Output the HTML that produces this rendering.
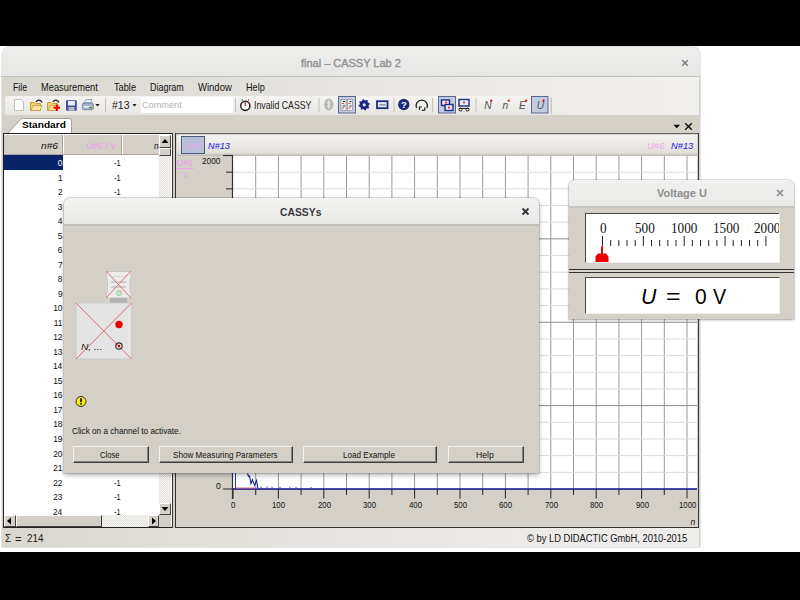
<!DOCTYPE html>
<html><head><meta charset="utf-8"><style>
html,body{margin:0;padding:0}
body{width:800px;height:600px;background:#000;position:relative;overflow:hidden;font-family:"Liberation Sans",sans-serif}
body>div,body>svg{position:absolute}
.t{white-space:nowrap}
</style></head><body>
<div style="left:0px;top:46px;width:800px;height:506px;background:#fff"></div>
<div style="left:1.5px;top:47px;width:698.5px;height:500px;background:#d4d0c8;border-radius:7px 7px 0 0;box-shadow:0 0 0 0.5px #c9c9c9"></div>
<div style="left:1px;top:47px;width:699px;height:30px;background:linear-gradient(#eeeeed,#e6e6e5);border-radius:7px 7px 0 0;border-bottom:1px solid #c2c0bc;box-sizing:border-box"></div>
<div class="t" style="left:301.00px;top:53.00px;font-size:11.2px;line-height:20px;transform:scaleX(0.9803);transform-origin:0 0;-webkit-text-stroke:0.35px #8e9091;color:#8e9091">final – CASSY Lab 2</div>
<svg style="left:681px;top:59px" width="8" height="8"><path d="M1.2 1.2L6.8 6.8M6.8 1.2L1.2 6.8" stroke="#7e7e7e" stroke-width="1.5"/></svg>
<div style="left:2px;top:77px;width:697px;height:38px;background:linear-gradient(to right,#d9d6cf,#e6e4e0 45%,#f1f0ee)"></div>
<div class="t" style="left:13.36px;top:78.00px;font-size:10.2px;line-height:20px;transform:scaleX(0.8525);transform-origin:0 0;color:#111">File</div>
<div class="t" style="left:41.02px;top:78.00px;font-size:10.2px;line-height:20px;transform:scaleX(0.9122);transform-origin:0 0;color:#111">Measurement</div>
<div class="t" style="left:113.77px;top:78.00px;font-size:10.2px;line-height:20px;transform:scaleX(0.9053);transform-origin:0 0;color:#111">Table</div>
<div class="t" style="left:149.54px;top:78.00px;font-size:10.2px;line-height:20px;transform:scaleX(0.8779);transform-origin:0 0;color:#111">Diagram</div>
<div class="t" style="left:198.10px;top:78.00px;font-size:10.2px;line-height:20px;transform:scaleX(0.9324);transform-origin:0 0;color:#111">Window</div>
<div class="t" style="left:246.13px;top:78.00px;font-size:10.2px;line-height:20px;transform:scaleX(0.8950);transform-origin:0 0;color:#111">Help</div>
<div style="left:5px;top:96px;width:547px;height:19px;background:linear-gradient(#f5f4f2,#e8e6e2);border-radius:3px 0 0 3px"></div>
<div style="left:551px;top:97px;width:1px;height:17px;background:#d0cec8"></div>
<div style="left:2px;top:114.5px;width:697px;height:1px;background:#c9c6bf"></div>
<svg style="left:0;top:0" width="800" height="130"><path d="M14.5 99.5 H21 L23.5 102 V110.5 H14.5z" fill="#fff" stroke="#bdbdbd"/><path d="M30.5 102.5 h4 l1 1 h5 v7 h-10z" fill="#f0d27a" stroke="#c89c3c"/><path d="M31 110.5 l2 -5 h9 l-2 5z" fill="#fbe49a" stroke="#c89c3c" stroke-width="0.8"/><path d="M36 102 q2 -3 5 -1 l1 1.5" fill="none" stroke="#111" stroke-width="1.2"/><path d="M47.5 102.5 h4 l1 1 h5 v7 h-10z" fill="#f0d27a" stroke="#c89c3c"/><path d="M48 110.5 l2 -5 h9 l-2 5z" fill="#fbe49a" stroke="#c89c3c" stroke-width="0.8"/><path d="M53 102 q2 -3 5 -1 l1 1.5" fill="none" stroke="#111" stroke-width="1.2"/><path d="M56.8 104.5 v6.5 M53.5 107.8 h6.5" stroke="#e00" stroke-width="2"/><rect x="66" y="100.3" width="10.8" height="10.4" fill="#3f51a8" rx="0.8"/><rect x="68" y="101" width="7" height="4.5" fill="#e8ecf8"/><rect x="68.5" y="107" width="6" height="3.7" fill="#b8b8c0"/><path d="M84 103 l2 -3.5 h6 l-1 3.5z" fill="#e6eef6" stroke="#8898b0" stroke-width="0.8"/><rect x="82.3" y="103" width="11" height="6.8" rx="1.5" fill="#9fb0c8" stroke="#6a7a98" stroke-width="0.8"/><rect x="83.5" y="106" width="8" height="1.6" fill="#eef"/><rect x="89" y="106.8" width="3" height="1.6" fill="#3a3"/><path d="M95.5 104 h4 l-2 2.5z" fill="#000"/><line x1="105.5" y1="98" x2="105.5" y2="112" stroke="#c4c2bc"/><line x1="235.5" y1="98" x2="235.5" y2="112" stroke="#c4c2bc"/><line x1="319" y1="98" x2="319" y2="112" stroke="#c4c2bc"/><line x1="394" y1="98" x2="394" y2="112" stroke="#c4c2bc"/><line x1="432.5" y1="98" x2="432.5" y2="112" stroke="#c4c2bc"/><line x1="476" y1="98" x2="476" y2="112" stroke="#c4c2bc"/><line x1="551" y1="98" x2="551" y2="112" stroke="#c4c2bc"/><path d="M132.5 104 h4 l-2 2.5z" fill="#000"/><circle cx="245.3" cy="105.8" r="4.6" fill="#fff" stroke="#222" stroke-width="1.5"/><line x1="245.3" y1="102" x2="245.3" y2="106" stroke="#c33" stroke-width="1.2"/><path d="M241.5 100.5 l1.2 -0.8" stroke="#3a3" stroke-width="1.5"/><path d="M248 99.7 l1.2 0.8" stroke="#d44" stroke-width="1.5"/><ellipse cx="328.8" cy="104.5" rx="4.6" ry="6" fill="#b8b8b8"/><path d="M327 102 l3.5 4.5 l-2 1.8 v-8 l2 1.8 l-3.5 4.5" fill="none" stroke="#e8e8e8" stroke-width="0.9"/><rect x="338.5" y="96.5" width="17" height="16.5" fill="#c3cbe0" stroke="#5a6890" stroke-width="1"/><rect x="438.5" y="96.5" width="17" height="16.5" fill="#c3cbe0" stroke="#5a6890" stroke-width="1"/><rect x="531.5" y="96.5" width="16.5" height="16.5" fill="#c3cbe0" stroke="#5a6890" stroke-width="1"/><rect x="341" y="99.5" width="5" height="11" fill="#f0f0f0" stroke="#888" stroke-width="0.6"/><rect x="347.5" y="99.5" width="5" height="11" fill="#f0f0f0" stroke="#888" stroke-width="0.6"/><path d="M343 101.5h2M349.5 101.5h2M343 106h2M349.5 106h2" stroke="#222" stroke-width="1"/><path d="M342 103.5h2M348.5 103.5h2M342 108h2M348.5 108h2" stroke="#d44" stroke-width="1"/><polygon points="370.08,103.63 368.42,105.64 369.19,108.13 366.59,108.38 365.37,110.68 363.36,109.02 360.87,109.79 360.62,107.19 358.32,105.97 359.98,103.96 359.21,101.47 361.81,101.22 363.03,98.92 365.04,100.58 367.53,99.81 367.78,102.41" fill="#1c2580"/><circle cx="364.2" cy="104.8" r="1.6" fill="#e6e6f0"/><rect x="377" y="101.2" width="10.5" height="7" fill="#e8e8f0" stroke="#1c2a80" stroke-width="1.8"/><rect x="379.3" y="104" width="6" height="1.6" fill="#999"/><circle cx="403.8" cy="104.5" r="5.7" fill="#1e2a7a"/><text x="403.8" y="108.2" font-family="Liberation Sans" font-weight="bold" font-size="9.5" fill="#fff" text-anchor="middle">?</text><path d="M416.5 108 a5.7 5.7 0 1 1 10.5 0" fill="none" stroke="#222" stroke-width="1.3"/><path d="M419.5 110 v-3 h2.5 M422 110 a1.5 1.5 0 1 0 2.5 -2.5" fill="none" stroke="#222" stroke-width="1.2"/><rect x="441.5" y="100" width="8" height="5.5" fill="#e8ecf6" stroke="#1c2a80" stroke-width="1.4"/><rect x="445" y="104.5" width="8" height="6" fill="#e8ecf6" stroke="#1c2a80" stroke-width="1.4"/><circle cx="446" cy="102.5" r="1" fill="#e22"/><circle cx="449" cy="107.5" r="1.1" fill="#e22"/><rect x="459" y="99.5" width="10" height="6.5" fill="#e8ecf6" stroke="#1c2a80" stroke-width="1.4"/><circle cx="464" cy="102.5" r="1.1" fill="#e22"/><path d="M459 108.5 h10" stroke="#222" stroke-width="1"/><circle cx="460.5" cy="109.5" r="1.5" fill="none" stroke="#222"/><circle cx="467.5" cy="109.5" r="1.5" fill="none" stroke="#222"/><text x="488" y="108.5" font-family="Liberation Sans" font-style="italic" font-size="10.2" fill="#505050" text-anchor="middle">N</text><circle cx="491.3" cy="100.7" r="1.1" fill="#e00"/><text x="505.3" y="108.5" font-family="Liberation Sans" font-style="italic" font-size="10.2" fill="#505050" text-anchor="middle">n</text><circle cx="508.8" cy="100.7" r="1.1" fill="#e00"/><text x="522.5" y="108.5" font-family="Liberation Sans" font-style="italic" font-size="10.2" fill="#505050" text-anchor="middle">E</text><circle cx="526" cy="100.7" r="1.1" fill="#e00"/><text x="540.5" y="108.5" font-family="Liberation Sans" font-style="italic" font-size="10.2" fill="#505050" text-anchor="middle">U</text><circle cx="543.5" cy="100.7" r="1.1" fill="#e00"/></svg>
<div class="t" style="left:112.00px;top:96.00px;font-size:10px;line-height:20px;transform:scaleX(1.0462);transform-origin:0 0;color:#222">#13</div>
<div style="left:141px;top:96.5px;width:91.5px;height:16px;background:#fff"></div>
<div class="t" style="left:142.42px;top:95.00px;font-size:9.6px;line-height:20px;transform:scaleX(0.9552);transform-origin:0 0;color:#b4b4b4">Comment</div>
<div class="t" style="left:253.66px;top:96.00px;font-size:10.4px;line-height:20px;transform:scaleX(0.8433);transform-origin:0 0;color:#222">Invalid CASSY</div>
<div style="left:2px;top:115px;width:697px;height:18px;background:#d4d0c8"></div>
<svg style="left:7px;top:118px" width="66" height="16"><path d="M0.5 15.5 L13.5 1.5 Q14.5 0.5 16.5 0.5 L62 0.5 Q64.5 0.5 64.5 3 L64.5 15.5" fill="#fff" stroke="#a09e98"/></svg>
<div class="t" style="left:21.73px;top:115.00px;font-size:9.3px;line-height:20px;transform:scaleX(1.0886);transform-origin:0 0;font-weight:bold;color:#000">Standard</div>
<svg style="left:672.5px;top:124px" width="8" height="6"><path d="M0.5 0.8H7L3.75 4.3z" fill="#000"/></svg>
<svg style="left:684px;top:122px" width="9" height="9"><path d="M1.2 1.2L7.8 7.8M7.8 1.2L1.2 7.8" stroke="#000" stroke-width="1.25"/></svg>
<div style="left:2px;top:528px;width:697px;height:18.5px;background:linear-gradient(to right,#d9d6cf,#e6e4e0 45%,#f0efed)"></div>
<div class="t" style="left:5.02px;top:529.00px;font-size:10.2px;line-height:20px;transform:scaleX(0.9636);transform-origin:0 0;color:#1a1a1a">Σ</div>
<div class="t" style="left:14.95px;top:530.00px;font-size:10.2px;line-height:20px;transform:scaleX(1.1000);transform-origin:0 0;color:#1a1a1a">=</div>
<div class="t" style="left:27.42px;top:529.00px;font-size:10.2px;line-height:20px;transform:scaleX(0.9662);transform-origin:0 0;color:#1a1a1a">214</div>
<div class="t" style="left:527.20px;top:529.00px;font-size:10px;line-height:20px;transform:scaleX(0.9351);transform-origin:0 0;color:#111">© by LD DIDACTIC GmbH, 2010-2015</div>
<div style="left:3px;top:133px;width:169px;height:395px;background:#fff;border:1px solid #222;border-right:none;box-sizing:border-box"></div>
<div style="left:4px;top:135px;width:155px;height:20px;background:#d4d0c8"></div>
<div style="left:62px;top:135px;width:1px;height:20px;background:#a9a59d"></div>
<div style="left:63px;top:135px;width:1px;height:20px;background:#fff"></div>
<div style="left:121px;top:135px;width:1px;height:20px;background:#a9a59d"></div>
<div style="left:122px;top:135px;width:1px;height:20px;background:#fff"></div>
<div style="left:4px;top:154px;width:155px;height:1px;background:#a9a59d"></div>
<div class="t" style="left:41.00px;top:137.00px;font-size:8.2px;line-height:20px;transform:scaleX(1.2436);transform-origin:0 0;font-style:italic;color:#111">n#6</div>
<div class="t" style="left:85.69px;top:137.00px;font-size:8.2px;line-height:20px;transform:scaleX(1.1145);transform-origin:0 0;font-style:italic;color:#ec9aec">U#6 / V</div>
<div class="t" style="left:154.00px;top:137.00px;font-size:8.2px;line-height:20px;transform:scaleX(1.0000);transform-origin:0 0;font-style:italic;color:#111">n</div>
<div style="left:4px;top:155px;width:58.5px;height:14.5px;background:#0a246a"></div>
<div class="t" style="left:57.70px;top:153.00px;font-size:8.4px;line-height:20px;transform:scaleX(1.0000);transform-origin:0 0;color:#fff">0</div>
<div class="t" style="left:113.78px;top:153.00px;font-size:8.4px;line-height:20px;transform:scaleX(0.8857);transform-origin:0 0;color:#111">-1</div>
<div class="t" style="left:57.95px;top:168.00px;font-size:8.4px;line-height:20px;transform:scaleX(1.0000);transform-origin:0 0;color:#111">1</div>
<div class="t" style="left:113.78px;top:168.00px;font-size:8.4px;line-height:20px;transform:scaleX(0.8857);transform-origin:0 0;color:#111">-1</div>
<div class="t" style="left:57.95px;top:182.00px;font-size:8.4px;line-height:20px;transform:scaleX(1.0000);transform-origin:0 0;color:#111">2</div>
<div class="t" style="left:113.78px;top:182.00px;font-size:8.4px;line-height:20px;transform:scaleX(0.8857);transform-origin:0 0;color:#111">-1</div>
<div class="t" style="left:57.70px;top:197.00px;font-size:8.4px;line-height:20px;transform:scaleX(1.0000);transform-origin:0 0;color:#111">3</div>
<div class="t" style="left:113.78px;top:197.00px;font-size:8.4px;line-height:20px;transform:scaleX(0.8857);transform-origin:0 0;color:#111">-1</div>
<div class="t" style="left:57.70px;top:211.00px;font-size:8.4px;line-height:20px;transform:scaleX(1.0000);transform-origin:0 0;color:#111">4</div>
<div class="t" style="left:113.78px;top:211.00px;font-size:8.4px;line-height:20px;transform:scaleX(0.8857);transform-origin:0 0;color:#111">-1</div>
<div class="t" style="left:57.70px;top:226.00px;font-size:8.4px;line-height:20px;transform:scaleX(1.0000);transform-origin:0 0;color:#111">5</div>
<div class="t" style="left:113.78px;top:226.00px;font-size:8.4px;line-height:20px;transform:scaleX(0.8857);transform-origin:0 0;color:#111">-1</div>
<div class="t" style="left:57.70px;top:240.00px;font-size:8.4px;line-height:20px;transform:scaleX(1.0000);transform-origin:0 0;color:#111">6</div>
<div class="t" style="left:113.78px;top:240.00px;font-size:8.4px;line-height:20px;transform:scaleX(0.8857);transform-origin:0 0;color:#111">-1</div>
<div class="t" style="left:57.95px;top:255.00px;font-size:8.4px;line-height:20px;transform:scaleX(1.0000);transform-origin:0 0;color:#111">7</div>
<div class="t" style="left:113.78px;top:255.00px;font-size:8.4px;line-height:20px;transform:scaleX(0.8857);transform-origin:0 0;color:#111">-1</div>
<div class="t" style="left:57.70px;top:269.00px;font-size:8.4px;line-height:20px;transform:scaleX(1.0000);transform-origin:0 0;color:#111">8</div>
<div class="t" style="left:113.78px;top:269.00px;font-size:8.4px;line-height:20px;transform:scaleX(0.8857);transform-origin:0 0;color:#111">-1</div>
<div class="t" style="left:57.95px;top:284.00px;font-size:8.4px;line-height:20px;transform:scaleX(1.0000);transform-origin:0 0;color:#111">9</div>
<div class="t" style="left:113.78px;top:284.00px;font-size:8.4px;line-height:20px;transform:scaleX(0.8857);transform-origin:0 0;color:#111">-1</div>
<div class="t" style="left:53.20px;top:298.00px;font-size:8.4px;line-height:20px;transform:scaleX(1.0000);transform-origin:0 0;color:#111">10</div>
<div class="t" style="left:113.78px;top:298.00px;font-size:8.4px;line-height:20px;transform:scaleX(0.8857);transform-origin:0 0;color:#111">-1</div>
<div class="t" style="left:53.70px;top:313.00px;font-size:8.4px;line-height:20px;transform:scaleX(1.0000);transform-origin:0 0;color:#111">11</div>
<div class="t" style="left:113.78px;top:313.00px;font-size:8.4px;line-height:20px;transform:scaleX(0.8857);transform-origin:0 0;color:#111">-1</div>
<div class="t" style="left:53.20px;top:327.00px;font-size:8.4px;line-height:20px;transform:scaleX(1.0000);transform-origin:0 0;color:#111">12</div>
<div class="t" style="left:113.78px;top:327.00px;font-size:8.4px;line-height:20px;transform:scaleX(0.8857);transform-origin:0 0;color:#111">-1</div>
<div class="t" style="left:53.20px;top:342.00px;font-size:8.4px;line-height:20px;transform:scaleX(1.0000);transform-origin:0 0;color:#111">13</div>
<div class="t" style="left:113.78px;top:342.00px;font-size:8.4px;line-height:20px;transform:scaleX(0.8857);transform-origin:0 0;color:#111">-1</div>
<div class="t" style="left:52.95px;top:356.00px;font-size:8.4px;line-height:20px;transform:scaleX(1.0000);transform-origin:0 0;color:#111">14</div>
<div class="t" style="left:113.78px;top:356.00px;font-size:8.4px;line-height:20px;transform:scaleX(0.8857);transform-origin:0 0;color:#111">-1</div>
<div class="t" style="left:53.20px;top:371.00px;font-size:8.4px;line-height:20px;transform:scaleX(1.0000);transform-origin:0 0;color:#111">15</div>
<div class="t" style="left:113.78px;top:371.00px;font-size:8.4px;line-height:20px;transform:scaleX(0.8857);transform-origin:0 0;color:#111">-1</div>
<div class="t" style="left:53.20px;top:385.00px;font-size:8.4px;line-height:20px;transform:scaleX(1.0000);transform-origin:0 0;color:#111">16</div>
<div class="t" style="left:113.78px;top:385.00px;font-size:8.4px;line-height:20px;transform:scaleX(0.8857);transform-origin:0 0;color:#111">-1</div>
<div class="t" style="left:53.20px;top:400.00px;font-size:8.4px;line-height:20px;transform:scaleX(1.0000);transform-origin:0 0;color:#111">17</div>
<div class="t" style="left:113.78px;top:400.00px;font-size:8.4px;line-height:20px;transform:scaleX(0.8857);transform-origin:0 0;color:#111">-1</div>
<div class="t" style="left:53.20px;top:414.00px;font-size:8.4px;line-height:20px;transform:scaleX(1.0000);transform-origin:0 0;color:#111">18</div>
<div class="t" style="left:113.78px;top:414.00px;font-size:8.4px;line-height:20px;transform:scaleX(0.8857);transform-origin:0 0;color:#111">-1</div>
<div class="t" style="left:53.20px;top:429.00px;font-size:8.4px;line-height:20px;transform:scaleX(1.0000);transform-origin:0 0;color:#111">19</div>
<div class="t" style="left:113.78px;top:429.00px;font-size:8.4px;line-height:20px;transform:scaleX(0.8857);transform-origin:0 0;color:#111">-1</div>
<div class="t" style="left:53.20px;top:444.00px;font-size:8.4px;line-height:20px;transform:scaleX(1.0000);transform-origin:0 0;color:#111">20</div>
<div class="t" style="left:113.78px;top:444.00px;font-size:8.4px;line-height:20px;transform:scaleX(0.8857);transform-origin:0 0;color:#111">-1</div>
<div class="t" style="left:53.20px;top:458.00px;font-size:8.4px;line-height:20px;transform:scaleX(1.0000);transform-origin:0 0;color:#111">21</div>
<div class="t" style="left:113.78px;top:458.00px;font-size:8.4px;line-height:20px;transform:scaleX(0.8857);transform-origin:0 0;color:#111">-1</div>
<div class="t" style="left:53.20px;top:473.00px;font-size:8.4px;line-height:20px;transform:scaleX(1.0000);transform-origin:0 0;color:#111">22</div>
<div class="t" style="left:113.78px;top:473.00px;font-size:8.4px;line-height:20px;transform:scaleX(0.8857);transform-origin:0 0;color:#111">-1</div>
<div class="t" style="left:53.20px;top:487.00px;font-size:8.4px;line-height:20px;transform:scaleX(1.0000);transform-origin:0 0;color:#111">23</div>
<div class="t" style="left:113.78px;top:487.00px;font-size:8.4px;line-height:20px;transform:scaleX(0.8857);transform-origin:0 0;color:#111">-1</div>
<div class="t" style="left:52.95px;top:502.00px;font-size:8.4px;line-height:20px;transform:scaleX(1.0000);transform-origin:0 0;color:#111">24</div>
<div class="t" style="left:113.78px;top:502.00px;font-size:8.4px;line-height:20px;transform:scaleX(0.8857);transform-origin:0 0;color:#111">-1</div>
<div style="left:159px;top:135px;width:12px;height:380px;background:repeating-conic-gradient(#e4e2dd 0% 25%, #f6f5f3 0% 50%) 0 0/2px 2px"></div>
<div style="left:159px;top:135px;width:12px;height:12.5px;background:#d4d0c8;border-top:1px solid #fff;border-left:1px solid #fff;border-right:1px solid #404040;border-bottom:1px solid #404040;box-sizing:border-box"></div>
<svg style="left:161px;top:138px" width="8" height="6"><path d="M4 1L7.5 5H0.5z" fill="#000"/></svg>
<div style="left:159px;top:147.5px;width:12px;height:8px;background:#d4d0c8;border-top:1px solid #fff;border-left:1px solid #fff;border-right:1px solid #404040;border-bottom:1px solid #404040;box-sizing:border-box"></div>
<div style="left:159px;top:503px;width:12px;height:12px;background:#d4d0c8;border-top:1px solid #fff;border-left:1px solid #fff;border-right:1px solid #404040;border-bottom:1px solid #404040;box-sizing:border-box"></div>
<svg style="left:161px;top:506px" width="8" height="6"><path d="M0.5 1H7.5L4 5z" fill="#000"/></svg>
<div style="left:4px;top:515px;width:155px;height:12px;background:repeating-conic-gradient(#e4e2dd 0% 25%, #f6f5f3 0% 50%) 0 0/2px 2px"></div>
<div style="left:4px;top:515px;width:11.5px;height:12px;background:#d4d0c8;border-top:1px solid #fff;border-left:1px solid #fff;border-right:1px solid #404040;border-bottom:1px solid #404040;box-sizing:border-box"></div>
<svg style="left:6px;top:517px" width="6" height="8"><path d="M1 4L5 0.5V7.5z" fill="#000"/></svg>
<div style="left:15.5px;top:515px;width:86px;height:12px;background:#d4d0c8;border-top:1px solid #fff;border-left:1px solid #fff;border-right:1px solid #404040;border-bottom:1px solid #404040;box-sizing:border-box"></div>
<div style="left:147.5px;top:515px;width:11.5px;height:12px;background:#d4d0c8;border-top:1px solid #fff;border-left:1px solid #fff;border-right:1px solid #404040;border-bottom:1px solid #404040;box-sizing:border-box"></div>
<svg style="left:151px;top:517px" width="6" height="8"><path d="M5 4L1 0.5V7.5z" fill="#000"/></svg>
<div style="left:159px;top:515px;width:12px;height:12px;background:#d4d0c8"></div>
<div style="left:3px;top:527px;width:169px;height:1px;background:#222"></div>
<div style="left:171.5px;top:133px;width:1px;height:395px;background:#333"></div>
<div style="left:175px;top:133px;width:1px;height:395px;background:#333"></div>
<div style="left:176px;top:133px;width:522px;height:395px;background:#d4d0c8"></div>
<div style="left:697.5px;top:133px;width:1.5px;height:395px;background:#3a3a3a"></div>
<div style="left:176px;top:527px;width:522px;height:1px;background:#333"></div>
<div style="left:176px;top:133px;width:522px;height:1px;background:#666"></div>
<div style="left:177px;top:135px;width:520px;height:20.5px;background:linear-gradient(#f4f3f1,#e2dfda 85%,#bdbab3)"></div>
<div style="left:181px;top:136px;width:23.5px;height:17.5px;background:#b8c0d8;border:1px solid #4a5a80;box-sizing:border-box"></div>
<div class="t" style="left:183.84px;top:136.00px;font-size:8.4px;line-height:20px;transform:scaleX(1.1233);transform-origin:0 0;font-style:italic;color:#e8a0e8">U#6</div>
<div class="t" style="left:207.83px;top:136.00px;font-size:8.4px;line-height:20px;transform:scaleX(1.0962);transform-origin:0 0;font-style:italic;color:#2020dd">N#13</div>
<div class="t" style="left:647.43px;top:136.00px;font-size:8.4px;line-height:20px;transform:scaleX(1.1333);transform-origin:0 0;font-style:italic;color:#f0a8f0">U#6</div>
<div class="t" style="left:670.72px;top:136.00px;font-size:8.4px;line-height:20px;transform:scaleX(1.1139);transform-origin:0 0;font-style:italic;color:#2020dd">N#13</div>
<div class="t" style="left:175.95px;top:153.00px;font-size:8.4px;line-height:20px;transform:scaleX(1.1000);transform-origin:0 0;font-style:italic;color:#ec9aec">U#6</div>
<div style="left:176px;top:168px;width:18px;height:1px;background:#f0a0f0"></div>
<div class="t" style="left:183.25px;top:165.00px;font-size:8.4px;line-height:20px;transform:scaleX(1.0000);transform-origin:0 0;color:#ec9aec">V</div>
<div style="left:233px;top:155.5px;width:464px;height:333.5px;background:#fff"></div>
<svg style="left:0;top:0" width="800" height="600"><line x1="255.70" y1="155.5" x2="255.70" y2="489" stroke="#9a9a9a" stroke-width="1"/><line x1="278.40" y1="155.5" x2="278.40" y2="489" stroke="#9a9a9a" stroke-width="1"/><line x1="301.10" y1="155.5" x2="301.10" y2="489" stroke="#9a9a9a" stroke-width="1"/><line x1="323.80" y1="155.5" x2="323.80" y2="489" stroke="#9a9a9a" stroke-width="1"/><line x1="346.50" y1="155.5" x2="346.50" y2="489" stroke="#9a9a9a" stroke-width="1"/><line x1="369.20" y1="155.5" x2="369.20" y2="489" stroke="#9a9a9a" stroke-width="1"/><line x1="391.90" y1="155.5" x2="391.90" y2="489" stroke="#9a9a9a" stroke-width="1"/><line x1="414.60" y1="155.5" x2="414.60" y2="489" stroke="#9a9a9a" stroke-width="1"/><line x1="437.30" y1="155.5" x2="437.30" y2="489" stroke="#9a9a9a" stroke-width="1"/><line x1="460.00" y1="155.5" x2="460.00" y2="489" stroke="#9a9a9a" stroke-width="1"/><line x1="482.70" y1="155.5" x2="482.70" y2="489" stroke="#9a9a9a" stroke-width="1"/><line x1="505.40" y1="155.5" x2="505.40" y2="489" stroke="#9a9a9a" stroke-width="1"/><line x1="528.10" y1="155.5" x2="528.10" y2="489" stroke="#9a9a9a" stroke-width="1"/><line x1="550.80" y1="155.5" x2="550.80" y2="489" stroke="#9a9a9a" stroke-width="1"/><line x1="573.50" y1="155.5" x2="573.50" y2="489" stroke="#9a9a9a" stroke-width="1"/><line x1="596.20" y1="155.5" x2="596.20" y2="489" stroke="#9a9a9a" stroke-width="1"/><line x1="618.90" y1="155.5" x2="618.90" y2="489" stroke="#9a9a9a" stroke-width="1"/><line x1="641.60" y1="155.5" x2="641.60" y2="489" stroke="#9a9a9a" stroke-width="1"/><line x1="664.30" y1="155.5" x2="664.30" y2="489" stroke="#9a9a9a" stroke-width="1"/><line x1="687.00" y1="155.5" x2="687.00" y2="489" stroke="#9a9a9a" stroke-width="1"/><line x1="233" y1="472.32" x2="697" y2="472.32" stroke="#dcdcdc" stroke-width="1"/><line x1="233" y1="455.65" x2="697" y2="455.65" stroke="#dcdcdc" stroke-width="1"/><line x1="233" y1="438.98" x2="697" y2="438.98" stroke="#dcdcdc" stroke-width="1"/><line x1="233" y1="422.30" x2="697" y2="422.30" stroke="#dcdcdc" stroke-width="1"/><line x1="233" y1="405.62" x2="697" y2="405.62" stroke="#8a8a8a" stroke-width="1"/><line x1="233" y1="388.95" x2="697" y2="388.95" stroke="#dcdcdc" stroke-width="1"/><line x1="233" y1="372.27" x2="697" y2="372.27" stroke="#dcdcdc" stroke-width="1"/><line x1="233" y1="355.60" x2="697" y2="355.60" stroke="#dcdcdc" stroke-width="1"/><line x1="233" y1="338.92" x2="697" y2="338.92" stroke="#dcdcdc" stroke-width="1"/><line x1="233" y1="322.25" x2="697" y2="322.25" stroke="#8a8a8a" stroke-width="1"/><line x1="233" y1="305.57" x2="697" y2="305.57" stroke="#dcdcdc" stroke-width="1"/><line x1="233" y1="288.90" x2="697" y2="288.90" stroke="#dcdcdc" stroke-width="1"/><line x1="233" y1="272.23" x2="697" y2="272.23" stroke="#dcdcdc" stroke-width="1"/><line x1="233" y1="255.55" x2="697" y2="255.55" stroke="#dcdcdc" stroke-width="1"/><line x1="233" y1="238.88" x2="697" y2="238.88" stroke="#8a8a8a" stroke-width="1"/><line x1="233" y1="222.20" x2="697" y2="222.20" stroke="#dcdcdc" stroke-width="1"/><line x1="233" y1="205.52" x2="697" y2="205.52" stroke="#dcdcdc" stroke-width="1"/><line x1="233" y1="188.85" x2="697" y2="188.85" stroke="#dcdcdc" stroke-width="1"/><line x1="233" y1="172.18" x2="697" y2="172.18" stroke="#dcdcdc" stroke-width="1"/><line x1="232.5" y1="155.5" x2="232.5" y2="499" stroke="#333" stroke-width="1.2"/><line x1="223" y1="489" x2="233" y2="489" stroke="#333" stroke-width="1.1"/><line x1="233" y1="489" x2="697" y2="489" stroke="#0c0c88" stroke-width="1.4"/><line x1="223" y1="155.5" x2="233" y2="155.5" stroke="#333" stroke-width="1.2"/><line x1="226" y1="472.32" x2="233" y2="472.32" stroke="#333" stroke-width="1.1"/><line x1="226" y1="455.65" x2="233" y2="455.65" stroke="#333" stroke-width="1.1"/><line x1="226" y1="438.98" x2="233" y2="438.98" stroke="#333" stroke-width="1.1"/><line x1="226" y1="422.30" x2="233" y2="422.30" stroke="#333" stroke-width="1.1"/><line x1="226" y1="405.62" x2="233" y2="405.62" stroke="#333" stroke-width="1.1"/><line x1="226" y1="388.95" x2="233" y2="388.95" stroke="#333" stroke-width="1.1"/><line x1="226" y1="372.27" x2="233" y2="372.27" stroke="#333" stroke-width="1.1"/><line x1="226" y1="355.60" x2="233" y2="355.60" stroke="#333" stroke-width="1.1"/><line x1="226" y1="338.92" x2="233" y2="338.92" stroke="#333" stroke-width="1.1"/><line x1="226" y1="322.25" x2="233" y2="322.25" stroke="#333" stroke-width="1.1"/><line x1="226" y1="305.57" x2="233" y2="305.57" stroke="#333" stroke-width="1.1"/><line x1="226" y1="288.90" x2="233" y2="288.90" stroke="#333" stroke-width="1.1"/><line x1="226" y1="272.23" x2="233" y2="272.23" stroke="#333" stroke-width="1.1"/><line x1="226" y1="255.55" x2="233" y2="255.55" stroke="#333" stroke-width="1.1"/><line x1="226" y1="238.88" x2="233" y2="238.88" stroke="#333" stroke-width="1.1"/><line x1="226" y1="222.20" x2="233" y2="222.20" stroke="#333" stroke-width="1.1"/><line x1="226" y1="205.52" x2="233" y2="205.52" stroke="#333" stroke-width="1.1"/><line x1="226" y1="188.85" x2="233" y2="188.85" stroke="#333" stroke-width="1.1"/><line x1="226" y1="172.18" x2="233" y2="172.18" stroke="#333" stroke-width="1.1"/><line x1="233.00" y1="489" x2="233.00" y2="498.5" stroke="#333" stroke-width="1.1"/><line x1="255.70" y1="489" x2="255.70" y2="495" stroke="#333" stroke-width="1.1"/><line x1="278.40" y1="489" x2="278.40" y2="498.5" stroke="#333" stroke-width="1.1"/><line x1="301.10" y1="489" x2="301.10" y2="495" stroke="#333" stroke-width="1.1"/><line x1="323.80" y1="489" x2="323.80" y2="498.5" stroke="#333" stroke-width="1.1"/><line x1="346.50" y1="489" x2="346.50" y2="495" stroke="#333" stroke-width="1.1"/><line x1="369.20" y1="489" x2="369.20" y2="498.5" stroke="#333" stroke-width="1.1"/><line x1="391.90" y1="489" x2="391.90" y2="495" stroke="#333" stroke-width="1.1"/><line x1="414.60" y1="489" x2="414.60" y2="498.5" stroke="#333" stroke-width="1.1"/><line x1="437.30" y1="489" x2="437.30" y2="495" stroke="#333" stroke-width="1.1"/><line x1="460.00" y1="489" x2="460.00" y2="498.5" stroke="#333" stroke-width="1.1"/><line x1="482.70" y1="489" x2="482.70" y2="495" stroke="#333" stroke-width="1.1"/><line x1="505.40" y1="489" x2="505.40" y2="498.5" stroke="#333" stroke-width="1.1"/><line x1="528.10" y1="489" x2="528.10" y2="495" stroke="#333" stroke-width="1.1"/><line x1="550.80" y1="489" x2="550.80" y2="498.5" stroke="#333" stroke-width="1.1"/><line x1="573.50" y1="489" x2="573.50" y2="495" stroke="#333" stroke-width="1.1"/><line x1="596.20" y1="489" x2="596.20" y2="498.5" stroke="#333" stroke-width="1.1"/><line x1="618.90" y1="489" x2="618.90" y2="495" stroke="#333" stroke-width="1.1"/><line x1="641.60" y1="489" x2="641.60" y2="498.5" stroke="#333" stroke-width="1.1"/><line x1="664.30" y1="489" x2="664.30" y2="495" stroke="#333" stroke-width="1.1"/><line x1="687.00" y1="489" x2="687.00" y2="498.5" stroke="#333" stroke-width="1.1"/><line x1="235.5" y1="488" x2="258" y2="488" stroke="#d06080" stroke-width="0.9"/><line x1="235.5" y1="300" x2="235.5" y2="489" stroke="#2233cc" stroke-width="1"/><polyline points="247.5,473.5 248.6,476.5 249.5,476 251,483.7 252.4,479.6 254.6,485.3 256.5,480.4 258,488.5" fill="none" stroke="#1020a0" stroke-width="1.1"/><path d="M261 488v-1.5M267 488v-1.5M272 488v-1.2M280 488v-1.2M290 488v-1M296 488v-1M311 488v-1" stroke="#1020a0" stroke-width="0.8"/></svg>
<div class="t" style="left:201.96px;top:151.00px;font-size:8.6px;line-height:20px;transform:scaleX(0.9622);transform-origin:0 0;color:#111">2000</div>
<div class="t" style="left:216.00px;top:476.00px;font-size:8.6px;line-height:20px;transform:scaleX(1.0000);transform-origin:0 0;color:#111">0</div>
<div class="t" style="left:231.34px;top:495.00px;font-size:8.6px;line-height:20px;transform:scaleX(0.9100);transform-origin:0 0;color:#111">0</div>
<div class="t" style="left:272.30px;top:495.00px;font-size:8.6px;line-height:20px;transform:scaleX(0.9100);transform-origin:0 0;color:#111">100</div>
<div class="t" style="left:317.82px;top:495.00px;font-size:8.6px;line-height:20px;transform:scaleX(0.9100);transform-origin:0 0;color:#111">200</div>
<div class="t" style="left:363.22px;top:495.00px;font-size:8.6px;line-height:20px;transform:scaleX(0.9100);transform-origin:0 0;color:#111">300</div>
<div class="t" style="left:408.73px;top:495.00px;font-size:8.6px;line-height:20px;transform:scaleX(0.9100);transform-origin:0 0;color:#111">400</div>
<div class="t" style="left:454.02px;top:495.00px;font-size:8.6px;line-height:20px;transform:scaleX(0.9100);transform-origin:0 0;color:#111">500</div>
<div class="t" style="left:499.42px;top:495.00px;font-size:8.6px;line-height:20px;transform:scaleX(0.9100);transform-origin:0 0;color:#111">600</div>
<div class="t" style="left:544.82px;top:495.00px;font-size:8.6px;line-height:20px;transform:scaleX(0.9100);transform-origin:0 0;color:#111">700</div>
<div class="t" style="left:590.22px;top:495.00px;font-size:8.6px;line-height:20px;transform:scaleX(0.9100);transform-origin:0 0;color:#111">800</div>
<div class="t" style="left:635.62px;top:495.00px;font-size:8.6px;line-height:20px;transform:scaleX(0.9100);transform-origin:0 0;color:#111">900</div>
<div class="t" style="left:678.74px;top:495.00px;font-size:8.6px;line-height:20px;transform:scaleX(0.9100);transform-origin:0 0;color:#111">1000</div>
<div class="t" style="left:690.50px;top:512.00px;font-size:8.6px;line-height:20px;transform:scaleX(1.0000);transform-origin:0 0;font-style:italic;color:#111">n</div>
<div style="left:63.8px;top:198px;width:475px;height:275px;background:#d4d0c8;border-radius:6px 6px 0 0;box-shadow:0 2px 5px rgba(0,0,0,.32), 0 0 0 1px rgba(0,0,0,.12)"></div>
<div style="left:63.8px;top:198px;width:475px;height:28px;background:linear-gradient(#f3f3f2,#e9e9e8);border-radius:6px 6px 0 0;border-bottom:2px solid #c0bdb8;box-sizing:border-box"></div>
<div class="t" style="left:280.43px;top:202.00px;font-size:11px;line-height:20px;transform:scaleX(0.9410);transform-origin:0 0;font-weight:bold;color:#3a3a3a">CASSYs</div>
<svg style="left:521px;top:207px" width="9" height="9"><path d="M1.5 1.5L7.5 7.5M7.5 1.5L1.5 7.5" stroke="#333" stroke-width="1.8"/></svg>
<svg style="left:70px;top:265px" width="70" height="100">
<path d="M36.5 6.5 h24.5 v6.5 l-1 1.5 v12 l1 1.5 v5 h-24.5 v-5 l1 -1.5 v-12 l-1 -1.5z" fill="#ebebeb" stroke="#c6c6c6"/><path d="M40 11.5h17" stroke="#d8d8d8"/>
<line x1="41" y1="17" x2="56" y2="17" stroke="#b4b4b4"/><line x1="41" y1="22" x2="56" y2="22" stroke="#b4b4b4"/>
<circle cx="49" cy="28" r="2.5" fill="#cfe8cf" stroke="#9c9"/>
<rect x="40" y="33" width="17" height="5" fill="#b2b2b2"/>
<line x1="36" y1="6" x2="61" y2="33" stroke="#e06060" stroke-width="0.9"/><line x1="61" y1="6" x2="36" y2="33" stroke="#e06060" stroke-width="0.9"/>
<rect x="6" y="38" width="55.5" height="56" fill="#e4e4e4" stroke="#cacaca"/>
<line x1="6" y1="38" x2="61.5" y2="94" stroke="#e06060" stroke-width="0.9"/><line x1="61.5" y1="38" x2="6" y2="94" stroke="#e06060" stroke-width="0.9"/>
<circle cx="49" cy="59.5" r="3.7" fill="#ee0000"/>
<circle cx="49" cy="81" r="3.2" fill="none" stroke="#333" stroke-width="1.2"/><circle cx="49" cy="81" r="1.3" fill="#c00"/>
</svg>
<div class="t" style="left:81.10px;top:337.00px;font-size:8.4px;line-height:20px;transform:scaleX(1.2182);transform-origin:0 0;font-style:italic;color:#222">N, ...</div>
<svg style="left:75px;top:395px" width="12" height="13"><circle cx="6" cy="6.5" r="5" fill="#f4ee1a" stroke="#333" stroke-width="1"/><rect x="5.2" y="3.2" width="1.6" height="4" fill="#000"/><rect x="5.2" y="8.2" width="1.6" height="1.5" fill="#000"/></svg>
<div class="t" style="left:72.08px;top:421.00px;font-size:9.7px;line-height:20px;transform:scaleX(0.8463);transform-origin:0 0;color:#111">Click on a channel to activate.</div>
<div style="left:72.5px;top:445.5px;width:76.5px;height:17.5px;background:#d4d0c8;border-top:1px solid #f2f1ee;border-left:1px solid #f2f1ee;border-right:1px solid #404040;border-bottom:1px solid #404040;box-shadow:inset -1px -1px #808080;box-sizing:border-box"></div>
<div class="t" style="left:99.59px;top:445.00px;font-size:9.4px;line-height:20px;transform:scaleX(0.8172);transform-origin:0 0;color:#111">Close</div>
<div style="left:159px;top:445.5px;width:134px;height:17.5px;background:#d4d0c8;border-top:1px solid #f2f1ee;border-left:1px solid #f2f1ee;border-right:1px solid #404040;border-bottom:1px solid #404040;box-shadow:inset -1px -1px #808080;box-sizing:border-box"></div>
<div class="t" style="left:173.07px;top:445.00px;font-size:9.4px;line-height:20px;transform:scaleX(0.8657);transform-origin:0 0;color:#111">Show Measuring Parameters</div>
<div style="left:302.6px;top:445.5px;width:134.39999999999998px;height:17.5px;background:#d4d0c8;border-top:1px solid #f2f1ee;border-left:1px solid #f2f1ee;border-right:1px solid #404040;border-bottom:1px solid #404040;box-shadow:inset -1px -1px #808080;box-sizing:border-box"></div>
<div class="t" style="left:342.75px;top:445.00px;font-size:9.4px;line-height:20px;transform:scaleX(0.8661);transform-origin:0 0;color:#111">Load Example</div>
<div style="left:447.6px;top:445.5px;width:76.39999999999998px;height:17.5px;background:#d4d0c8;border-top:1px solid #f2f1ee;border-left:1px solid #f2f1ee;border-right:1px solid #404040;border-bottom:1px solid #404040;box-shadow:inset -1px -1px #808080;box-sizing:border-box"></div>
<div class="t" style="left:476.11px;top:445.00px;font-size:9.4px;line-height:20px;transform:scaleX(0.9205);transform-origin:0 0;color:#111">Help</div>
<div style="left:569px;top:179.5px;width:225px;height:139.5px;background:#d4d0c8;border-radius:6px 6px 0 0;box-shadow:0 1px 3px rgba(0,0,0,.28), 0 0 0 1px rgba(0,0,0,.1)"></div>
<div style="left:569px;top:179.5px;width:225px;height:28px;background:linear-gradient(#f0f0ef,#e9e9e8);border-radius:6px 6px 0 0;border-bottom:2px solid #c8c5c0;box-sizing:border-box"></div>
<div class="t" style="left:656.60px;top:183.00px;font-size:11.2px;line-height:20px;transform:scaleX(0.9831);transform-origin:0 0;font-weight:bold;color:#8e8e8e">Voltage U</div>
<svg style="left:776px;top:189px" width="8" height="8"><path d="M1 1L7 7M7 1L1 7" stroke="#8a8a8a" stroke-width="1.6"/></svg>
<div style="left:584.5px;top:213px;width:195px;height:50px;background:#fff;border-top:1.5px solid #4a4a4a;border-left:1.5px solid #4a4a4a;border-bottom:1px solid #eee;border-right:1px solid #eee;box-sizing:border-box"></div>
<div class="t" style="left:600.42px;top:219.00px;font-size:13.9px;line-height:20px;transform:scaleX(0.9500);transform-origin:0 0;font-family:'Liberation Serif',serif;color:#111">0</div>
<div class="t" style="left:635.02px;top:219.00px;font-size:13.9px;line-height:20px;transform:scaleX(0.9500);transform-origin:0 0;font-family:'Liberation Serif',serif;color:#111">500</div>
<div class="t" style="left:670.96px;top:219.00px;font-size:13.9px;line-height:20px;transform:scaleX(0.9500);transform-origin:0 0;font-family:'Liberation Serif',serif;color:#111">1000</div>
<div class="t" style="left:712.96px;top:219.00px;font-size:13.9px;line-height:20px;transform:scaleX(0.9500);transform-origin:0 0;font-family:'Liberation Serif',serif;color:#111">1500</div>
<div class="t" style="left:753.82px;top:219.00px;font-size:13.9px;line-height:20px;transform:scaleX(0.9500);transform-origin:0 0;font-family:'Liberation Serif',serif;color:#111">2000</div>
<svg style="left:0;top:0" width="800" height="600"><line x1="602.50" y1="236" x2="602.50" y2="246" stroke="#222" stroke-width="1"/><line x1="610.67" y1="240" x2="610.67" y2="246" stroke="#222" stroke-width="1"/><line x1="618.84" y1="240" x2="618.84" y2="246" stroke="#222" stroke-width="1"/><line x1="627.01" y1="240" x2="627.01" y2="246" stroke="#222" stroke-width="1"/><line x1="635.18" y1="240" x2="635.18" y2="246" stroke="#222" stroke-width="1"/><line x1="643.35" y1="236" x2="643.35" y2="246" stroke="#222" stroke-width="1"/><line x1="651.52" y1="240" x2="651.52" y2="246" stroke="#222" stroke-width="1"/><line x1="659.69" y1="240" x2="659.69" y2="246" stroke="#222" stroke-width="1"/><line x1="667.86" y1="240" x2="667.86" y2="246" stroke="#222" stroke-width="1"/><line x1="676.03" y1="240" x2="676.03" y2="246" stroke="#222" stroke-width="1"/><line x1="684.20" y1="236" x2="684.20" y2="246" stroke="#222" stroke-width="1"/><line x1="692.37" y1="240" x2="692.37" y2="246" stroke="#222" stroke-width="1"/><line x1="700.54" y1="240" x2="700.54" y2="246" stroke="#222" stroke-width="1"/><line x1="708.71" y1="240" x2="708.71" y2="246" stroke="#222" stroke-width="1"/><line x1="716.88" y1="240" x2="716.88" y2="246" stroke="#222" stroke-width="1"/><line x1="725.05" y1="236" x2="725.05" y2="246" stroke="#222" stroke-width="1"/><line x1="733.22" y1="240" x2="733.22" y2="246" stroke="#222" stroke-width="1"/><line x1="741.39" y1="240" x2="741.39" y2="246" stroke="#222" stroke-width="1"/><line x1="749.56" y1="240" x2="749.56" y2="246" stroke="#222" stroke-width="1"/><line x1="757.73" y1="240" x2="757.73" y2="246" stroke="#222" stroke-width="1"/><line x1="765.90" y1="236" x2="765.90" y2="246" stroke="#222" stroke-width="1"/><path d="M601 246.5 H603 V253.5 H606 L608.5 256.5 V262 H595.5 V256.5 L598 253.5 H601z" fill="#ee0000"/></svg>
<div style="left:779px;top:213px;width:1px;height:50px;background:#eee"></div>
<div style="left:780px;top:213px;width:14px;height:50px;background:#d4d0c8"></div>
<div style="left:569px;top:268.5px;width:225px;height:1.3px;background:#333"></div>
<div style="left:569px;top:271.7px;width:225px;height:1.3px;background:#333"></div>
<div style="left:584.5px;top:277px;width:195px;height:37px;background:#fff;border-top:1.5px solid #4a4a4a;border-left:1.5px solid #4a4a4a;border-bottom:1px solid #eee;border-right:1px solid #eee;box-sizing:border-box"></div>
<div class="t" style="left:641.19px;top:287.00px;font-size:21.8px;line-height:20px;transform:scaleX(0.9759);transform-origin:0 0;color:#000"><i>U</i></div>
<div class="t" style="left:665.76px;top:287.00px;font-size:21.8px;line-height:20px;transform:scaleX(1.1442);transform-origin:0 0;color:#000">=</div>
<div class="t" style="left:694.58px;top:287.00px;font-size:21.8px;line-height:20px;transform:scaleX(0.9619);transform-origin:0 0;color:#000">0</div>
<div class="t" style="left:712.50px;top:287.00px;font-size:21.8px;line-height:20px;transform:scaleX(0.9034);transform-origin:0 0;color:#000">V</div>
</body></html>
